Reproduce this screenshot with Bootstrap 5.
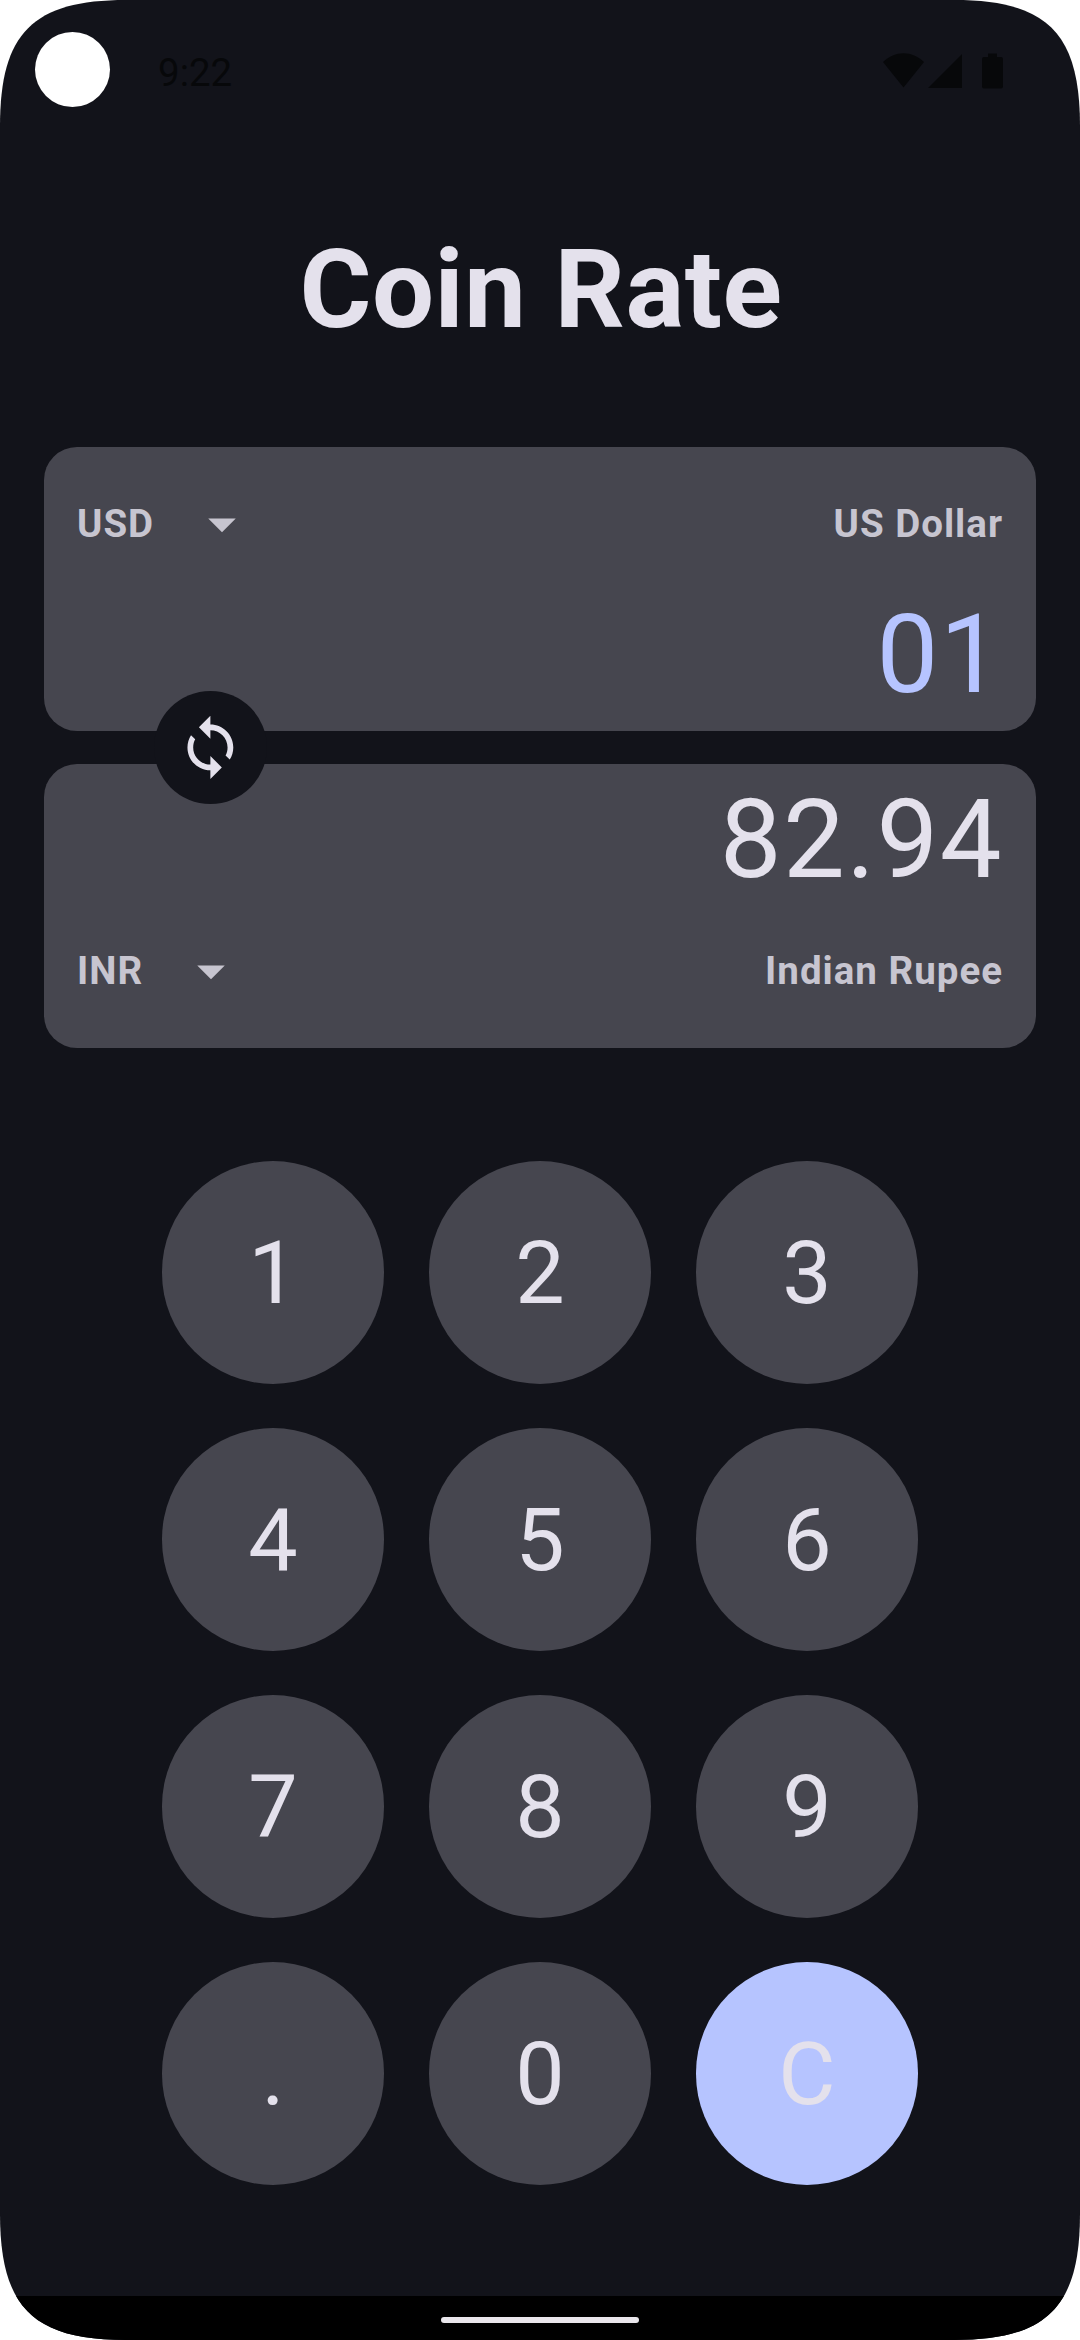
<!DOCTYPE html>
<html lang="en">
<head>
<meta charset="utf-8">
<meta name="viewport" content="width=device-width, initial-scale=1">
<title>Coin Rate</title>
<link href="https://cdn.jsdelivr.net/npm/bootstrap@5.3.0/dist/css/bootstrap.min.css" rel="stylesheet">
<style>
  :root { --surface: #12131a; --panel: #46464f; --on-panel: #c7c5d0; --ink: #e4e1ec; --accent: #b6c4ff; }
  body { background: #fff; font-family: Roboto, sans-serif; color: var(--ink); }
  .phone { width: 1080px; height: 2340px; background: var(--surface);
    clip-path: path("M0 126C0 33 33 0 126 0H954C1047 0 1080 33 1080 126V2214C1080 2307 1047 2340 954 2340H126C33 2340 0 2307 0 2214Z"); }
  .status { height: 140px; color: #07080a; padding: 32px 77px 0 35px; }
  .camera { width: 75px; height: 75px; }
  .clock { font-size: 38.5px; line-height: 75px; margin-left: 48px; padding-top: 3px; }
  .app-title { font-size: 110px; line-height: 150px; margin: 75px 0 82px; padding-left: 2px; letter-spacing: .55px; }
  .panels { padding: 0 44px; gap: 33px; }
  .panel { height: 284px; border-radius: 33px; background: var(--panel); padding: 12px 33px; }
  .panel.lower { padding-top: 10px; }
  .panel-row { height: 130px; }
  .panel.lower .panel-row { height: 131px; }
  .label { font-size: 38.5px; line-height: 52px; color: var(--on-panel); letter-spacing: 1px; }
  .amount { font-size: 110px; line-height: 132px; letter-spacing: 1.375px; }
  .accent { color: var(--accent); }
  .caret { width: 66px; height: 66px; margin-left: 35px; fill: var(--on-panel); }
  .swap { left: 154px; top: 244px; width: 113px; height: 113px; background: var(--surface); }
  .swap svg { width: 68.75px; height: 68.75px; fill: var(--ink); }
  .keys { display: grid; grid-template-columns: repeat(3, 222.67px); grid-auto-rows: 222.67px; gap: 44.33px; margin-top: 113px; }
  .key { background: var(--panel); color: var(--ink); font-size: 88px; line-height: 104px; border: 0; padding: 2px 0 0; }
  .key.clear { background: var(--accent); }
  .navstrip { height: 44px; background: #000; }
  .navstrip span { width: 198px; height: 6px; border-radius: 3px; background: #e9e6eb; margin-top: 4px; }
</style>
</head>
<body>
<main class="phone d-flex flex-column overflow-hidden">
  <header class="status d-flex align-items-start">
    <span class="camera bg-white rounded-circle"></span>
    <span class="clock">9:22</span>
    <svg class="ms-auto" width="120" height="36" viewBox="0 0 120 36" fill="currentColor" transform="translate(0 21)">
      <path d="M0 9C12-2.600 29-2.600 41 9L20.500 34.500Z"/>
      <path d="M45 35L79 1V35Z"/>
      <path d="M105 0.500h9v3.500h4a2 2 0 0 1 2 2v27.500a2 2 0 0 1-2 2h-17a2 2 0 0 1-2-2V6a2 2 0 0 1 2-2h4z"/>
    </svg>
  </header>
  <h1 class="app-title text-center fw-bold">Coin Rate</h1>
  <section class="panels d-flex flex-column position-relative">
    <div class="panel">
      <div class="panel-row d-flex align-items-center">
        <span class="label fw-bold">USD</span>
        <svg class="caret" viewBox="0 0 24 24"><path d="M7 10l5 5 5-5z"/></svg>
        <span class="label fw-bold ms-auto">US Dollar</span>
      </div>
      <div class="panel-row amount accent text-end">01</div>
    </div>
    <div class="panel lower">
      <div class="panel-row amount text-end">82.94</div>
      <div class="panel-row d-flex align-items-center">
        <span class="label fw-bold">INR</span>
        <svg class="caret" viewBox="0 0 24 24"><path d="M7 10l5 5 5-5z"/></svg>
        <span class="label fw-bold ms-auto">Indian Rupee</span>
      </div>
    </div>
    <button class="swap btn position-absolute rounded-circle border-0 p-0 d-flex align-items-center justify-content-center" aria-label="Swap currencies">
      <svg viewBox="0 0 24 24"><path d="M12 4V1L8 5l4 4V6c3.310 0 6 2.690 6 6 0 1.010-.25 1.970-.7 2.800l1.460 1.460C19.540 15.030 20 13.570 20 12c0-4.420-3.580-8-8-8zm0 14c-3.310 0-6-2.690-6-6 0-1.010.25-1.970.7-2.800L5.240 7.740C4.460 8.970 4 10.430 4 12c0 4.420 3.580 8 8 8v3l4-4-4-4v3z"/></svg>
    </button>
  </section>
  <section class="keys justify-content-center">
    <button class="key btn rounded-circle">1</button>
    <button class="key btn rounded-circle">2</button>
    <button class="key btn rounded-circle">3</button>
    <button class="key btn rounded-circle">4</button>
    <button class="key btn rounded-circle">5</button>
    <button class="key btn rounded-circle">6</button>
    <button class="key btn rounded-circle">7</button>
    <button class="key btn rounded-circle">8</button>
    <button class="key btn rounded-circle">9</button>
    <button class="key btn rounded-circle">.</button>
    <button class="key btn rounded-circle">0</button>
    <button class="key clear btn rounded-circle">C</button>
  </section>
  <footer class="navstrip mt-auto d-flex align-items-center justify-content-center"><span></span></footer>
</main>
<script src="https://cdn.jsdelivr.net/npm/bootstrap@5.3.0/dist/js/bootstrap.bundle.min.js"></script>
</body>
</html>
